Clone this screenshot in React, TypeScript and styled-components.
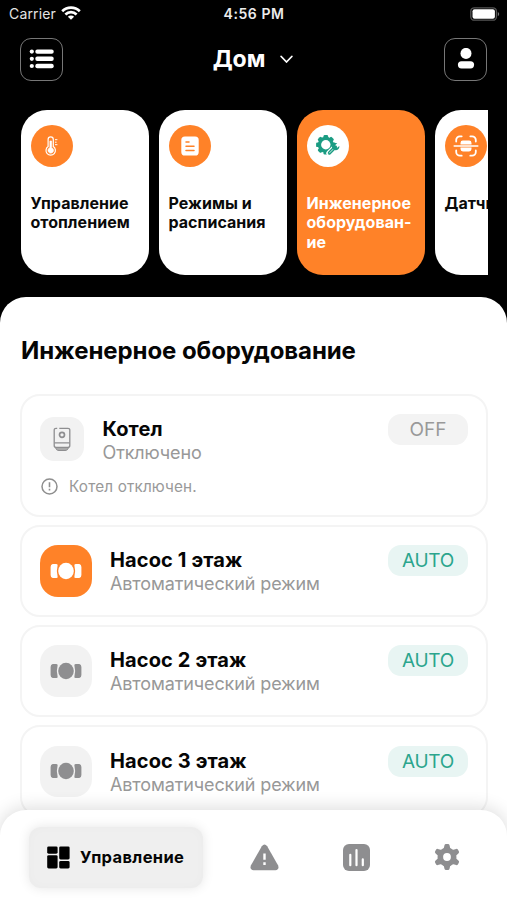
import React from 'react';
import styled, { createGlobalStyle } from 'styled-components';

const ORANGE = '#ff8228';
const GREEN = '#1b9c83';
const GREY = '#8e8e90';

const GlobalStyle = createGlobalStyle`
  * { box-sizing: border-box; }
  body { margin: 0; background: #000; font-family: Inter, sans-serif; }
  button { font: inherit; border: 0; padding: 0; background: none; color: inherit; }
  svg { display: block; flex: none; }
`;

const Screen = styled.div`
  width: 507px;
  height: 900px;
  display: flex;
  flex-direction: column;
  overflow: hidden;
  background: #000;
  color: #fff;
`;

const StatusBar = styled.div`
  display: grid;
  grid-template-columns: 1fr auto 1fr;
  align-items: center;
  height: 27px;
  padding: 0 7px 0 9px;
  font-size: 14px;
  line-height: 27px;
`;

const Carrier = styled.div`
  display: flex;
  align-items: center;
  gap: 5px;
  letter-spacing: 0.15px;
  color: #e4e4e4;
`;

const Clock = styled.div`
  padding-right: 1px;
  font-weight: 600;
  letter-spacing: 0.55px;
  color: #ececec;
`;

const Battery = styled.div`
  justify-self: end;
`;

const Header = styled.header`
  display: flex;
  justify-content: space-between;
  align-items: center;
  height: 43px;
  margin: 10.5px 20px 0;
`;

const SquareButton = styled.button`
  display: flex;
  align-items: center;
  justify-content: center;
  width: 43px;
  height: 43px;
  border: 1px solid #777;
  border-radius: 11px;
`;

const HomePicker = styled.button`
  display: flex;
  align-items: center;
  gap: 15px;
  padding-right: 1px;
  font-size: 23px;
  font-weight: 700;
  line-height: 43px;
`;

const Sections = styled.nav`
  display: flex;
  gap: 10px;
  height: 165px;
  margin: 29px 19.5px 0 20.5px;
  overflow: hidden;
`;

const SectionCard = styled.button<{ $active?: boolean }>`
  flex: none;
  display: flex;
  flex-direction: column;
  align-items: flex-start;
  width: 128px;
  height: 165px;
  padding: 15px 10px 0;
  border-radius: 26px;
  background: ${(p) => (p.$active ? ORANGE : '#fff')};
  color: ${(p) => (p.$active ? '#fff' : '#0a0a0a')};
`;

const SectionIcon = styled.span<{ $active?: boolean }>`
  display: flex;
  align-items: center;
  justify-content: center;
  width: 42px;
  height: 42px;
  border-radius: 50%;
  background: ${(p) => (p.$active ? '#fff' : ORANGE)};
`;

const SectionName = styled.span`
  margin-top: 27.5px;
  font-size: 16px;
  font-weight: 700;
  line-height: 19.3px;
  letter-spacing: 0.04px;
  text-align: left;
  white-space: pre;
`;

const Panel = styled.main`
  flex: 1;
  min-height: 0;
  margin-top: 22px;
  padding: 0 20px;
  overflow: hidden;
  border-radius: 26px 26px 0 0;
  background: #fff;
  color: #050505;
`;

const PanelTitle = styled.h1`
  margin: 39px 0 28px 1px;
  font-size: 24px;
  font-weight: 650;
  line-height: 30px;
  letter-spacing: -0.08px;
`;

const DeviceList = styled.div`
  display: flex;
  flex-direction: column;
  gap: 8px;
`;

const DeviceCard = styled.article<{ $tall?: boolean }>`
  flex: none;
  display: flex;
  flex-direction: column;
  width: 468px;
  height: ${(p) => (p.$tall ? 123 : 92.3)}px;
  padding: ${(p) => (p.$tall ? '17px' : '17.5px')} 18px 0;
  border: 2px solid #f4f4f4;
  border-radius: 20px;
`;

const DeviceRow = styled.div`
  display: flex;
  align-items: flex-start;
`;

const DeviceIcon = styled.div<{ $size: number; $on?: boolean }>`
  display: flex;
  align-items: center;
  justify-content: center;
  width: ${(p) => p.$size}px;
  height: ${(p) => p.$size}px;
  margin-top: ${(p) => (p.$size < 50 ? 4.5 : 1)}px;
  border-radius: ${(p) => (p.$size < 50 ? 14 : 18)}px;
  background: ${(p) => (p.$on ? ORANGE : '#f2f2f2')};
  color: ${(p) => (p.$on ? '#fff' : GREY)};
`;

const DeviceText = styled.div`
  flex: 1;
  margin-left: 18.5px;
  padding-top: 4px;
`;

const DeviceName = styled.div`
  font-size: 20px;
  font-weight: 700;
  line-height: 24px;
  letter-spacing: 0.12px;
`;

const DeviceState = styled.div`
  font-size: 18px;
  line-height: 23px;
  letter-spacing: -0.12px;
  color: #989898;
`;

const ModeBadge = styled.div<{ $auto?: boolean }>`
  width: 80px;
  height: 31px;
  margin-top: 1px;
  border-radius: 13px;
  background: ${(p) => (p.$auto ? '#e8f5f3' : '#f3f3f3')};
  color: ${(p) => (p.$auto ? '#2ba58d' : '#999')};
  font-size: 19px;
  line-height: 31px;
  letter-spacing: ${(p) => (p.$auto ? -0.3 : 0)}px;
  text-align: center;
`;

const Notice = styled.div`
  display: flex;
  align-items: center;
  gap: 11px;
  margin: 13px 0 0 1px;
  font-size: 15.3px;
  line-height: 20px;
  letter-spacing: 0.15px;
  color: #999;
`;

const TabBar = styled.nav`
  position: relative;
  flex: none;
  display: flex;
  align-items: center;
  height: 90px;
  margin-top: -26px;
  padding: 4px 47px 0 29px;
  border-radius: 26px 26px 0 0;
  background: #fff;
  box-shadow: 0 -2px 18px rgba(0, 0, 0, 0.14);
  color: ${GREY};
`;

const ActiveTab = styled.button`
  display: flex;
  align-items: center;
  gap: 10px;
  width: 174px;
  height: 61px;
  padding-left: 18px;
  border-radius: 12px;
  background: #efefef;
  box-shadow: 0 0 12px rgba(0, 0, 0, 0.1), inset 0 0 12px rgba(0, 0, 0, 0.02);
  color: #050505;
`;

const TabLabel = styled.span`
  font-size: 16.5px;
  font-weight: 700;
  letter-spacing: 0.35px;
`;

const OtherTabs = styled.div`
  flex: 1;
  display: flex;
  justify-content: space-between;
  align-items: center;
  margin-left: 46.5px;
`;

const WifiIcon = () => (
  <svg width="20" height="15" viewBox="0 0 20 15" fill="none" stroke="#fff" strokeWidth="2.7">
    <path d="M1.2 5.2A12.6 12.6 0 0 1 18.8 5.2" />
    <path d="M4.4 8.5A8 8 0 0 1 15.6 8.5" />
    <path d="M6.9 10.7A4.4 4.4 0 0 1 13.1 10.7L10 13.8Z" fill="#fff" stroke="none" />
  </svg>
);

const BatteryIcon = () => (
  <svg width="30" height="14" viewBox="0 0 30 14">
    <rect x=".8" y=".8" width="25.6" height="12.4" rx="3.5" fill="none" stroke="#555" strokeWidth="1.3" />
    <rect x="2.5" y="2.3" width="22.4" height="9.4" rx="2" fill="#fff" />
    <path d="M27.8 4.7q2.8 2.3 0 4.6z" fill="#777" />
  </svg>
);

const ListIcon = () => (
  <svg width="25" height="20" viewBox="0 0 25 20" fill="#fff">
    {[0.4, 7.6, 14.8].map((y) => (
      <g key={y}>
        <circle cx="2.8" cy={y + 2.2} r="2.1" />
        <rect x="6.3" y={y} width="18.4" height="4.4" rx="2" />
      </g>
    ))}
  </svg>
);

const UserIcon = () => (
  <svg width="18" height="22" viewBox="0 0 18 22" fill="#fff">
    <circle cx="9" cy="5.4" r="5.5" />
    <rect x=".9" y="13.2" width="16.2" height="7.2" rx="3.6" />
  </svg>
);

const ChevronIcon = () => (
  <svg width="13" height="9" viewBox="0 0 13 9" fill="none" stroke="#fff" strokeWidth="1.8" strokeLinecap="round" strokeLinejoin="round">
    <path d="M1.2 1.5 6.5 7l5.3-5.5" />
  </svg>
);

const ThermometerIcon = () => (
  <svg width="14" height="20" viewBox="0 0 14 20" fill="none" stroke="#fff">
    <path d="M3.1 10.6V3.5a2.6 2.6 0 0 1 5.2 0v7.1a4.7 4.7 0 1 1-5.2 0Z" strokeWidth="1.2" />
    <path d="M4.9 5h1.7v6.7a2.8 2.8 0 1 1-1.7 0Z" fill="#fff" stroke="#fff" strokeWidth=".6" />
    <path d="M10 3.7h2.4M10 6.2h1.6M10 8.7h2.4" strokeWidth="1" />
  </svg>
);

const DocumentIcon = () => (
  <svg width="18" height="20" viewBox="0 0 18 20">
    <rect x=".3" y=".5" width="17.4" height="19" rx="3.6" fill="#fff" />
    <path d="M5 6h3M5 10.2h8M5 14.4h8" stroke={ORANGE} strokeWidth="1.5" strokeLinecap="round" />
  </svg>
);

const teeth = [0, 45, 90, 135, 180, 225, 270, 315];

const ServiceIcon = () => (
  <svg width="24" height="21" viewBox="0 0 24 21">
    <g fill={GREEN}>
      {teeth.map((a) => (
        <rect key={a} x="7.5" y=".1" width="4.6" height="4.5" rx="1.2" transform={`rotate(${a} 9.8 9.8)`} />
      ))}
      <circle cx="9.8" cy="9.8" r="8" />
    </g>
    <circle cx="9.8" cy="9.8" r="4.7" fill="#fff" />
    <path d="m13 18.2 6-6" stroke="#fff" strokeWidth="5.4" strokeLinecap="round" />
    <path d="m13.4 18 6-6" stroke={GREEN} strokeWidth="3.3" strokeLinecap="round" />
    <path d="m13.4 18 3.6-3.6" stroke="#fff" strokeWidth=".8" strokeLinecap="round" />
    <path d="M21.3 8.3a3.7 3.7 0 1 0 2 2.7l-2.1 1.7-1.9-.5-.4-2Z" fill={GREEN} />
  </svg>
);

const SensorIcon = () => (
  <svg width="26" height="22" viewBox="0 0 26 22" fill="none" stroke="#fff" strokeWidth="1.8" strokeLinecap="round">
    <path d="M3.2 6.5V5A3.7 3.7 0 0 1 6.9 1.3h1.8M17.3 1.3h1.8A3.7 3.7 0 0 1 22.8 5v1.5M3.2 15.5V17a3.7 3.7 0 0 0 3.7 3.7h1.8M17.3 20.7h1.8a3.7 3.7 0 0 0 3.7-3.7v-1.5" />
    <path d="M1.2 11h23.6" strokeWidth="1.5" />
    <path d="M7.5 9.5V8q0-2.4 2.4-2.4h6.2q2.4 0 2.4 2.4v1.5zM7.5 12.6V14q0 2.4 2.4 2.4h6.2q2.4 0 2.4-2.4v-1.4z" fill="#fff" stroke="none" />
  </svg>
);

const BoilerIcon = () => (
  <svg width="18" height="25" viewBox="0 0 18 25" fill="none" stroke={GREY} strokeWidth="1.3">
    <path d="M4.2 1.3H3a1.8 1.8 0 0 0-1.8 1.8v15.4a2 2 0 0 0 2 2h11.6a2 2 0 0 0 2-2V3.1A1.8 1.8 0 0 0 15 1.3H6.3" />
    <circle cx="9" cy="7.8" r="2.5" strokeWidth="1.7" />
    <path d="M1.4 15.8h15.2" />
    <path d="M2.6 20.5h12.8c-.3 2-1.4 3-3.4 3H6c-2 0-3.1-1-3.4-3Z" fill="#aaa" strokeWidth="1" />
  </svg>
);

const PumpIcon = () => (
  <svg width="32" height="18" viewBox="0 0 32 18" fill="currentColor">
    <path d="M2.7 2h3.6q1.7 0 1.3 1.5-1.5 5.5 0 11 .4 1.5-1.3 1.5H2.7Q.6 15.6.6 13V5q0-2.6 2.1-3Z" />
    <path d="M29.3 2h-3.6q-1.7 0-1.3 1.5 1.5 5.5 0 11-.4 1.5 1.3 1.5h3.6q2.1-.4 2.1-3V5q0-2.6-2.1-3Z" />
    <ellipse cx="16" cy="9" rx="7.8" ry="8.3" />
  </svg>
);

const NoticeIcon = () => (
  <svg width="17" height="17" viewBox="0 0 17 17" fill="none" stroke="#8f8f8f" strokeWidth="1.5">
    <circle cx="8.5" cy="8.5" r="7.5" />
    <path d="M8.5 4.3v5M8.5 10.8v1.8" strokeWidth="1.6" />
  </svg>
);

const DashboardIcon = () => (
  <svg width="23" height="23" viewBox="0 0 23 23" fill="#000">
    <rect x=".2" y=".4" width="10.4" height="7.3" rx="1.4" />
    <rect x="12.2" y=".4" width="10.4" height="13" rx="1.4" />
    <rect x=".2" y="9.2" width="10.4" height="13.3" rx="1.4" />
    <rect x="12.2" y="15" width="10.4" height="7.5" rx="1.4" />
  </svg>
);

const AlertIcon = () => (
  <svg width="29" height="27" viewBox="0 0 29 27">
    <path d="M11.8 2.3q2.7-3.8 5.4 0L28 21.3q1.7 4.4-2.6 4.9H3.6Q-.7 25.7 1 21.3Z" fill={GREY} />
    <path d="M14.5 9.5v6.3M14.5 18.3v2.8" stroke="#fff" strokeWidth="2.4" />
  </svg>
);

const ChartIcon = () => (
  <svg width="27" height="27" viewBox="0 0 27 27">
    <rect width="27" height="27" rx="6" fill={GREY} />
    <path d="M7.3 10.8v10.4M13.5 6v15.2M19.8 15.4v5.8" stroke="#fff" strokeWidth="2.2" strokeLinecap="round" />
  </svg>
);

const GearIcon = () => (
  <svg width="26" height="28" viewBox="0 0 26 28">
    <g fill={GREY} stroke={GREY} strokeWidth="3" strokeLinejoin="round">
      {[0, 60, 120, 180, 240, 300].map((a) => (
        <path key={a} d="M12 2.4h2L15.4 8h-4.8Z" transform={`rotate(${a} 13 14)`} />
      ))}
      <circle cx="13" cy="14" r="8" />
    </g>
    <circle cx="13" cy="14" r="3.9" fill="#fff" />
  </svg>
);

const sections = [
  { name: 'Управление\nотоплением', icon: <ThermometerIcon /> },
  { name: 'Режимы и\nрасписания', icon: <DocumentIcon /> },
  { name: 'Инженерное\nоборудован-\nие', icon: <ServiceIcon />, active: true },
  { name: 'Датчики', icon: <SensorIcon /> },
];

const pumps = [
  { name: 'Насос 1 этаж', on: true },
  { name: 'Насос 2 этаж', on: false },
  { name: 'Насос 3 этаж', on: false },
];

export default function App() {
  return (
    <Screen>
      <GlobalStyle />
      <StatusBar>
        <Carrier>
          Carrier <WifiIcon />
        </Carrier>
        <Clock>4:56 PM</Clock>
        <Battery>
          <BatteryIcon />
        </Battery>
      </StatusBar>
      <Header>
        <SquareButton aria-label="Меню">
          <ListIcon />
        </SquareButton>
        <HomePicker>
          Дом <ChevronIcon />
        </HomePicker>
        <SquareButton aria-label="Профиль">
          <UserIcon />
        </SquareButton>
      </Header>
      <Sections>
        {sections.map((s) => (
          <SectionCard key={s.name} $active={s.active}>
            <SectionIcon $active={s.active}>{s.icon}</SectionIcon>
            <SectionName>{s.name}</SectionName>
          </SectionCard>
        ))}
      </Sections>
      <Panel>
        <PanelTitle>Инженерное оборудование</PanelTitle>
        <DeviceList>
          <DeviceCard $tall>
            <DeviceRow>
              <DeviceIcon $size={44}>
                <BoilerIcon />
              </DeviceIcon>
              <DeviceText>
                <DeviceName>Котел</DeviceName>
                <DeviceState>Отключено</DeviceState>
              </DeviceText>
              <ModeBadge>OFF</ModeBadge>
            </DeviceRow>
            <Notice>
              <NoticeIcon /> Котел отключен.
            </Notice>
          </DeviceCard>
          {pumps.map((p) => (
            <DeviceCard key={p.name}>
              <DeviceRow>
                <DeviceIcon $size={51.5} $on={p.on}>
                  <PumpIcon />
                </DeviceIcon>
                <DeviceText>
                  <DeviceName>{p.name}</DeviceName>
                  <DeviceState>Автоматический режим</DeviceState>
                </DeviceText>
                <ModeBadge $auto>AUTO</ModeBadge>
              </DeviceRow>
            </DeviceCard>
          ))}
        </DeviceList>
      </Panel>
      <TabBar>
        <ActiveTab>
          <DashboardIcon />
          <TabLabel>Управление</TabLabel>
        </ActiveTab>
        <OtherTabs>
          <AlertIcon />
          <ChartIcon />
          <GearIcon />
        </OtherTabs>
      </TabBar>
    </Screen>
  );
}
